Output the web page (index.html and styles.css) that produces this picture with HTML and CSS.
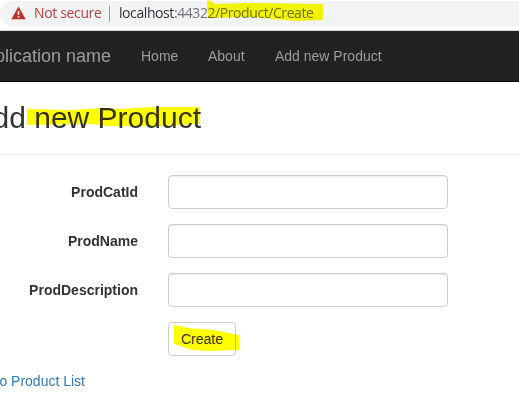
FILE: index.html
```html
<!DOCTYPE html>
<html lang="en">
<head>
<meta charset="utf-8">
<title>Add new Product</title>
<link rel="stylesheet" href="styles.css">
</head>
<body>
<div class="browser-bar">
  <div class="omnibox">
    <svg class="warning" viewBox="0 0 15 14" width="15" height="14"><path d="M7.5 .5 14.7 13.3H.3Z" fill="#c03028"/><path d="M6.7 5h1.6v4H6.7zM6.7 10h1.6v1.6H6.7z" fill="#f1f3f4"/></svg>
    <span class="insecure">Not secure</span>
    <span class="divider"></span>
    <span class="url">localhost<span class="path">:44322/Product/Create</span></span>
  </div>
  <svg class="marker marker-url" viewBox="0 0 116 22" width="116" height="22"><path d="M0 0 4 1 8 4 40 3 116 4V20L90 21 65 19 45 17 1 18Z"/></svg>
</div>
<nav class="navbar">
  <a class="brand"><span>Application name</span></a>
  <a class="nav-home">Home</a>
  <a class="nav-about">About</a>
  <a>Add new Product</a>
</nav>
<main>
  <h2><span>Add new Product</span></h2>
  <svg class="marker marker-title" viewBox="0 0 174 20" width="174" height="20"><path d="M0 2 45 3 75 1 95 2 125 0 173 0V17L130 19 80 19 65 17 0 18Z"/></svg>
  <form>
    <label for="cat">ProdCatId</label><input id="cat" type="text">
    <label for="name">ProdName</label><input id="name" type="text">
    <label for="desc">ProdDescription</label><input id="desc" type="text">
    <div class="action">
      <button type="button">Create</button>
      <svg class="marker marker-create" viewBox="0 0 66 28" width="66" height="28"><path d="M0 0 14 3 40 5 65 10V25L35 26 18 25 0 19Z"/></svg>
    </div>
  </form>
  <a class="back"><span>Back to Product List</span></a>
</main>
</body>
</html>
```
FILE: styles.css
```css
* { box-sizing: border-box; }
body {
  margin: 0;
  height: 405px;
  overflow: hidden;
  background: #fff;
  color: #333;
  font: 14px/20px "Liberation Sans", Arial, sans-serif;
}
.browser-bar {
  position: relative;
  height: 31px;
  padding-top: 1px;
  border-bottom: 1px solid #d5d7d9;
}
.omnibox {
  display: flex;
  align-items: center;
  height: 25px;
  padding-left: 11px;
  border-radius: 13px 0 0 13px;
  background: #f1f3f4;
  font: 14px/22px "Open Sans", "Noto Sans", sans-serif;
  white-space: nowrap;
}
.warning { flex: none; margin: 0 8px 2px 0; }
.insecure { width: 75px; padding-bottom: 2px; color: #bd413c; letter-spacing: -.35px; }
.divider { width: 1px; height: 16px; margin-right: 9px; background: #999; }
.url { padding-bottom: 2px; color: #303134; letter-spacing: -.42px; }
.path { color: #70757a; }
.marker {
  position: absolute;
  fill: #ff0;
  mix-blend-mode: multiply;
  pointer-events: none;
}
.marker-url { left: 207px; top: 0; }
.navbar {
  display: flex;
  align-items: center;
  height: 51px;
  border-bottom: 1px solid #080808;
  background: #222;
  color: #9d9d9d;
}
.brand {
  display: flex;
  justify-content: flex-end;
  width: 111px;
  margin-right: 30px;
  font-size: 18px;
  white-space: nowrap;
}
.nav-home { width: 67px; }
.nav-about { width: 67px; }
main { position: relative; padding-top: 19px; }
h2 {
  display: flex;
  justify-content: flex-end;
  width: 201px;
  height: 33px;
  margin: 0 0 20px;
  font-size: 30px;
  font-weight: 400;
  line-height: 33px;
  white-space: nowrap;
}
.marker-title { left: 27px; top: 25px; }
form {
  display: grid;
  grid-template-columns: 138px 280px;
  gap: 15px 30px;
  padding-top: 20px;
  border-top: 1px solid #eee;
}
label {
  padding-top: 7px;
  font-weight: 700;
  text-align: right;
}
input {
  width: 280px;
  height: 34px;
  border: 1px solid #ccc;
  border-radius: 4px;
  background: #fff;
  box-shadow: inset 0 1px 1px rgba(0, 0, 0, .075);
}
.action { position: relative; grid-column: 2; height: 34px; }
button {
  width: 68px;
  height: 34px;
  padding: 0;
  border: 1px solid #ccc;
  border-radius: 4px;
  background: #fff;
  color: #333;
  font: inherit;
}
.marker-create { left: 6px; top: 3px; }
.back {
  display: flex;
  justify-content: flex-end;
  width: 85px;
  margin-top: 15px;
  color: #337ab7;
  white-space: nowrap;
}
```
